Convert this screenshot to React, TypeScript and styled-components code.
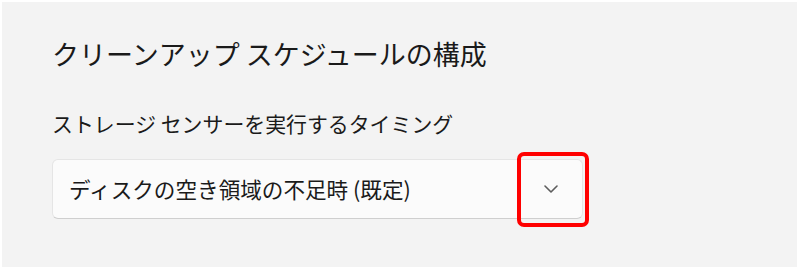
import { styled, createGlobalStyle } from "styled-components"

const GlobalStyle = createGlobalStyle`
    html, body {
        margin: 0;
        padding: 0;
        background: #ffffff;
    }
    body {
        font-family: "Noto Sans CJK JP", "Noto Sans", sans-serif;
        color: #1a1a1a;
    }
`

const Panel = styled.section`
    margin: 2px 3px 3px 2px;
    height: 265px;
    box-sizing: border-box;
    background: #f3f3f3;
    padding: 34px 0 0 50px;
    display: flex;
    flex-direction: column;
`

const Title = styled.h1`
    margin: 0;
    font-size: 27px;
    font-weight: 400;
    line-height: 36px;
`

const Label = styled.p`
    margin: 37px 0 0;
    font-size: 20.9px;
    line-height: 28px;
`

const SelectBox = styled.div`
    position: relative;
    margin-top: 22px;
    width: 531px;
    height: 60px;
    box-sizing: border-box;
    background: #fbfbfb;
    border: 1px solid #e5e5e5;
    border-bottom-color: #cfcfcf;
    border-radius: 6px;
    display: flex;
    align-items: center;
    justify-content: space-between;
    padding: 0 24px 0 16px;
`

const SelectText = styled.span`
    font-size: 21.6px;
    line-height: 28px;
`

const Chevron = styled.svg`
    width: 14px;
    height: 8px;
    color: #5d5d5d;
`

const Highlight = styled.div`
    position: absolute;
    left: 464px;
    top: -8px;
    width: 72px;
    height: 75px;
    box-sizing: border-box;
    border: 4px solid #ff0000;
    border-radius: 7px;
`

function App() {
    return (
        <>
            <GlobalStyle />
            <Panel>
                <Title>クリーンアップ スケジュールの構成</Title>
                <Label>ストレージ センサーを実行するタイミング</Label>
                <SelectBox>
                    <SelectText>ディスクの空き領域の不足時 (既定)</SelectText>
                    <Chevron viewBox="0 0 14 8" fill="none">
                        <polyline points="1,1 7,7 13,1" stroke="currentColor" strokeWidth="1.6" strokeLinecap="round" strokeLinejoin="round" />
                    </Chevron>
                    <Highlight />
                </SelectBox>
            </Panel>
        </>
    )
}

export default App
